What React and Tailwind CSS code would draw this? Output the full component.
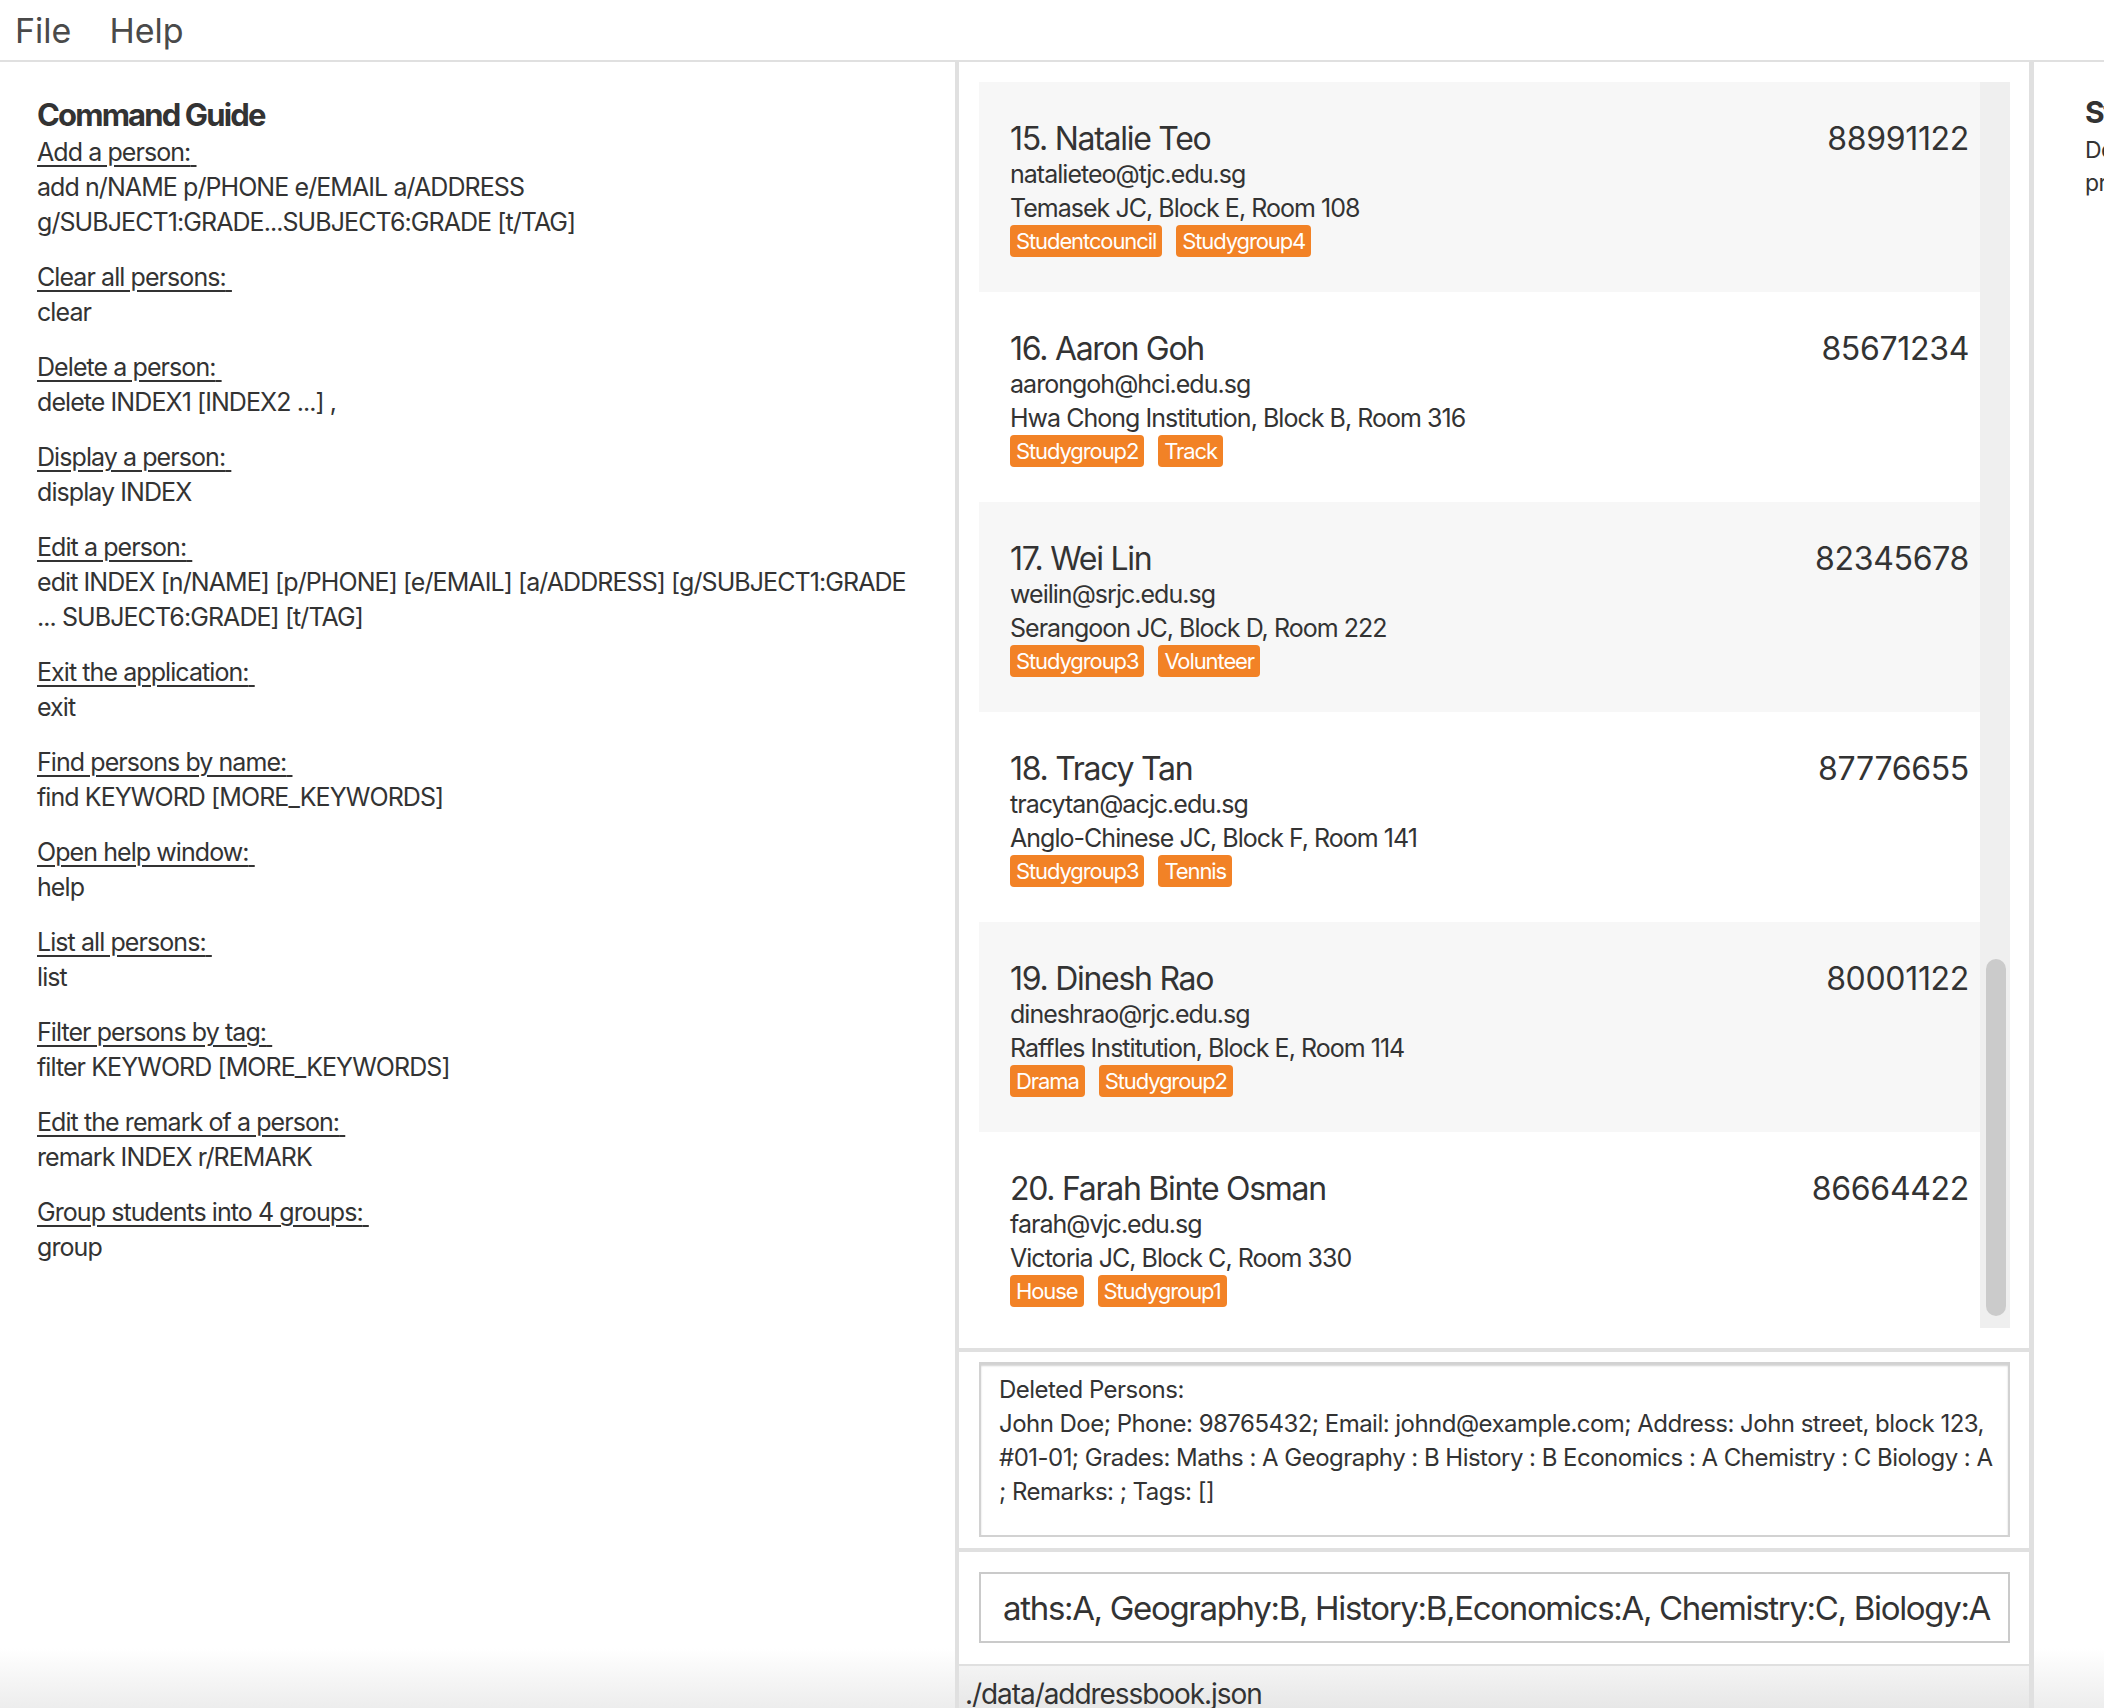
import React from "react";

const guide = [
  { h: "Add a person:", lines: ["add n/NAME p/PHONE e/EMAIL a/ADDRESS", "g/SUBJECT1:GRADE...SUBJECT6:GRADE [t/TAG]"] },
  { h: "Clear all persons:", lines: ["clear"] },
  { h: "Delete a person:", lines: ["delete INDEX1 [INDEX2 ...] ,"] },
  { h: "Display a person:", lines: ["display INDEX"] },
  { h: "Edit a person:", lines: ["edit INDEX [n/NAME] [p/PHONE] [e/EMAIL] [a/ADDRESS] [g/SUBJECT1:GRADE", "... SUBJECT6:GRADE] [t/TAG]"] },
  { h: "Exit the application:", lines: ["exit"] },
  { h: "Find persons by name:", lines: ["find KEYWORD [MORE_KEYWORDS]"] },
  { h: "Open help window:", lines: ["help"] },
  { h: "List all persons:", lines: ["list"] },
  { h: "Filter persons by tag:", lines: ["filter KEYWORD [MORE_KEYWORDS]"] },
  { h: "Edit the remark of a person:", lines: ["remark INDEX r/REMARK"] },
  { h: "Group students into 4 groups:", lines: ["group"] },
];

const persons = [
  { n: "15. Natalie Teo", p: "88991122", e: "natalieteo@tjc.edu.sg", a: "Temasek JC, Block E, Room 108", t: ["Studentcouncil", "Studygroup4"] },
  { n: "16. Aaron Goh", p: "85671234", e: "aarongoh@hci.edu.sg", a: "Hwa Chong Institution, Block B, Room 316", t: ["Studygroup2", "Track"] },
  { n: "17. Wei Lin", p: "82345678", e: "weilin@srjc.edu.sg", a: "Serangoon JC, Block D, Room 222", t: ["Studygroup3", "Volunteer"] },
  { n: "18. Tracy Tan", p: "87776655", e: "tracytan@acjc.edu.sg", a: "Anglo-Chinese JC, Block F, Room 141", t: ["Studygroup3", "Tennis"] },
  { n: "19. Dinesh Rao", p: "80001122", e: "dineshrao@rjc.edu.sg", a: "Raffles Institution, Block E, Room 114", t: ["Drama", "Studygroup2"] },
  { n: "20. Farah Binte Osman", p: "86664422", e: "farah@vjc.edu.sg", a: "Victoria JC, Block C, Room 330", t: ["House", "Studygroup1"] },
];

function Card({ person, idx }) {
  return (
    <div className={`h-[210px] shrink-0 pl-[31px] pr-[11px] pt-[38px] ${idx % 2 === 0 ? "bg-[#f7f7f7]" : "bg-white"}`}>
      <div className="flex justify-between text-[32px] leading-[37px] text-[#333]">
        <span className="whitespace-nowrap tracking-[-0.04em]">{person.n}</span>
        <span className="tracking-[-0.01em]">{person.p}</span>
      </div>
      <div className="text-[25px] leading-[34px] text-[#333] whitespace-nowrap tracking-[-0.039em]">{person.e}</div>
      <div className="text-[25px] leading-[34px] text-[#333] whitespace-nowrap tracking-[-0.039em]">{person.a}</div>
      <div className="flex gap-[14px]">
        {person.t.map((t) => (
          <span key={t} className="h-[32px] px-[6px] rounded-[4px] bg-[#f28226] text-white text-[22px] leading-[32px] whitespace-nowrap tracking-[-0.05em]">
            {t}
          </span>
        ))}
      </div>
    </div>
  );
}

export default function App() {
  return (
    <div className="w-[2104px] h-[1708px] overflow-hidden bg-white text-[#333] font-['Inter','Noto_Sans',sans-serif] flex flex-col">
      {/* Menu bar */}
      <div className="h-[62px] shrink-0 border-b-2 border-[#e0e0e0] flex items-center text-[34px] text-[#4a4a4a]">
        <span className="pl-[15px]">File</span>
        <span className="ml-[38px]">Help</span>
      </div>

      <div className="flex flex-1 min-h-0">
        {/* Left: Command guide */}
        <div className="w-[955px] shrink-0 flex flex-col">
          <div className="flex-1 pl-[37px] pt-[33px]">
            <div className="text-[31px] leading-[40px] font-bold text-[#333] tracking-[-0.06em]">Command Guide</div>
            {guide.map((s, i) => (
              <div key={s.h} className={i < guide.length - 1 ? "mb-[20px]" : ""}>
                <div className="text-[25px] leading-[35px] whitespace-nowrap tracking-[-0.037em]">
                  <span className="underline decoration-[1.5px] underline-offset-[4px]">{s.h}{"\u00a0"}</span>
                </div>
                {s.lines.map((l) => (
                  <div key={l} className="text-[25px] leading-[35px] whitespace-nowrap tracking-[-0.037em]">{l}</div>
                ))}
              </div>
            ))}
          </div>
          <div className="h-[60px] bg-gradient-to-b from-white to-[#ededed]" />
        </div>

        <div className="w-[4px] shrink-0 bg-[#e0e0e0]" />

        {/* Middle */}
        <div className="w-[1070px] shrink-0 flex flex-col">
          {/* List */}
          <div className="h-[1286px] shrink-0 pt-[20px] pb-[20px] pl-[20px] pr-[19px] flex">
            <div className="w-[1001px] h-[1246px] overflow-hidden flex flex-col">
              {persons.map((p, i) => (
                <Card key={p.n} person={p} idx={i} />
              ))}
            </div>
            <div className="w-[30px] h-[1246px] bg-[#efefef] pl-[6px] pt-[877px]">
              <div className="w-[20px] h-[357px] rounded-[10px] bg-[#cbcbcb]" />
            </div>
          </div>

          <div className="h-[4px] shrink-0 bg-[#e0e0e0]" />

          {/* Result display */}
          <div className="h-[196px] shrink-0 pt-[10px] pl-[20px] pr-[19px]">
            <div className="h-[175px] border-2 border-[#d2d2d2] shadow-[inset_0_2px_2px_rgba(0,0,0,0.18)] pl-[18px] pt-[9px] text-[24px] leading-[34px] text-[#333] tracking-[-0.022em]">
              <div className="whitespace-nowrap">Deleted Persons:</div>
              <div className="whitespace-nowrap">John Doe; Phone: 98765432; Email: johnd@example.com; Address: John street, block 123,</div>
              <div className="whitespace-nowrap">#01-01; Grades: Maths : A Geography : B History : B Economics : A Chemistry : C Biology : A</div>
              <div className="whitespace-nowrap">; Remarks: ; Tags: []</div>
            </div>
          </div>

          <div className="h-[4px] shrink-0 bg-[#e0e0e0]" />

          {/* Command box */}
          <div className="h-[112px] shrink-0 pt-[20px] pl-[20px] pr-[19px]">
            <div className="h-[71px] border-2 border-[#cacaca] flex items-center pl-[22px] overflow-hidden">
              <span className="text-[33px] leading-[40px] whitespace-nowrap text-[#333] tracking-[-0.04em]">aths:A, Geography:B, History:B,Economics:A, Chemistry:C, Biology:A</span>
            </div>
          </div>

          {/* Status bar */}
          <div className="flex-1 border-t-2 border-[#e0e0e0] bg-gradient-to-b from-[#f4f4f4] to-[#e6e6e6] pl-[6px] pt-[11px]">
            <div className="text-[28px] leading-[35px] whitespace-nowrap text-[#333] tracking-[-0.038em]">./data/addressbook.json</div>
          </div>
        </div>

        <div className="w-[5px] shrink-0 bg-[#e0e0e0]" />

        {/* Right panel (clipped) */}
        <div className="flex-1 min-w-0 overflow-hidden flex flex-col">
          <div className="flex-1 pl-[51px] pt-[31px]">
            <div className="text-[30px] leading-[38px] font-bold whitespace-nowrap text-[#333] tracking-[-0.05em]">Student Details</div>
            <div className="mt-[3px] text-[23px] leading-[33px] whitespace-nowrap text-[#333] tracking-[-0.03em]">Details of the selected student</div>
            <div className="text-[23px] leading-[33px] whitespace-nowrap text-[#333] tracking-[-0.03em]">profile will be shown here.</div>
          </div>
          <div className="h-[60px] bg-gradient-to-b from-white to-[#ededed]" />
        </div>
      </div>
    </div>
  );
}
